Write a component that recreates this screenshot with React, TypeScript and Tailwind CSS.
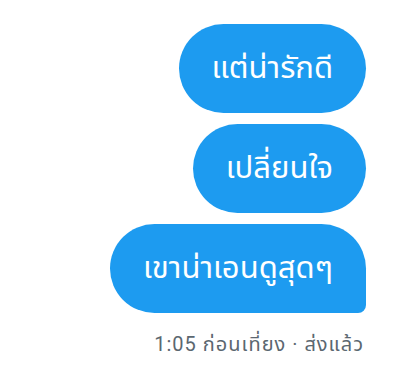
const messages = ["แต่น่ารักดี", "เปลี่ยนใจ", "เขาน่าเอนดูสุดๆ"];

export default function App() {
  return (
    <div
      className="flex h-[379px] w-[398px] flex-col items-end bg-white pr-[32px] pt-[24px]"
      style={{ fontFamily: 'Roboto, "Noto Sans", "Noto Sans Thai", sans-serif' }}
    >
      <div className="flex flex-col items-end gap-[11px]">
        {messages.map((m, i) => (
          <div
            key={m}
            className={
              i === messages.length - 1
                ? "flex h-[89px] items-center rounded-l-[45px] rounded-tr-[45px] rounded-br-[8px] bg-[#1d9bf0] px-[33px] text-[31px] text-white"
                : "flex h-[89px] items-center rounded-full bg-[#1d9bf0] px-[33px] text-[31px] text-white"
            }
          >
            {m}
          </div>
        ))}
      </div>
      <div className="mt-[17px] mr-[2px] text-[20px] leading-[28px] tracking-[1px] text-[#5b6770]">
        1:05 ก่อนเที่ยง · ส่งแล้ว
      </div>
    </div>
  );
}
